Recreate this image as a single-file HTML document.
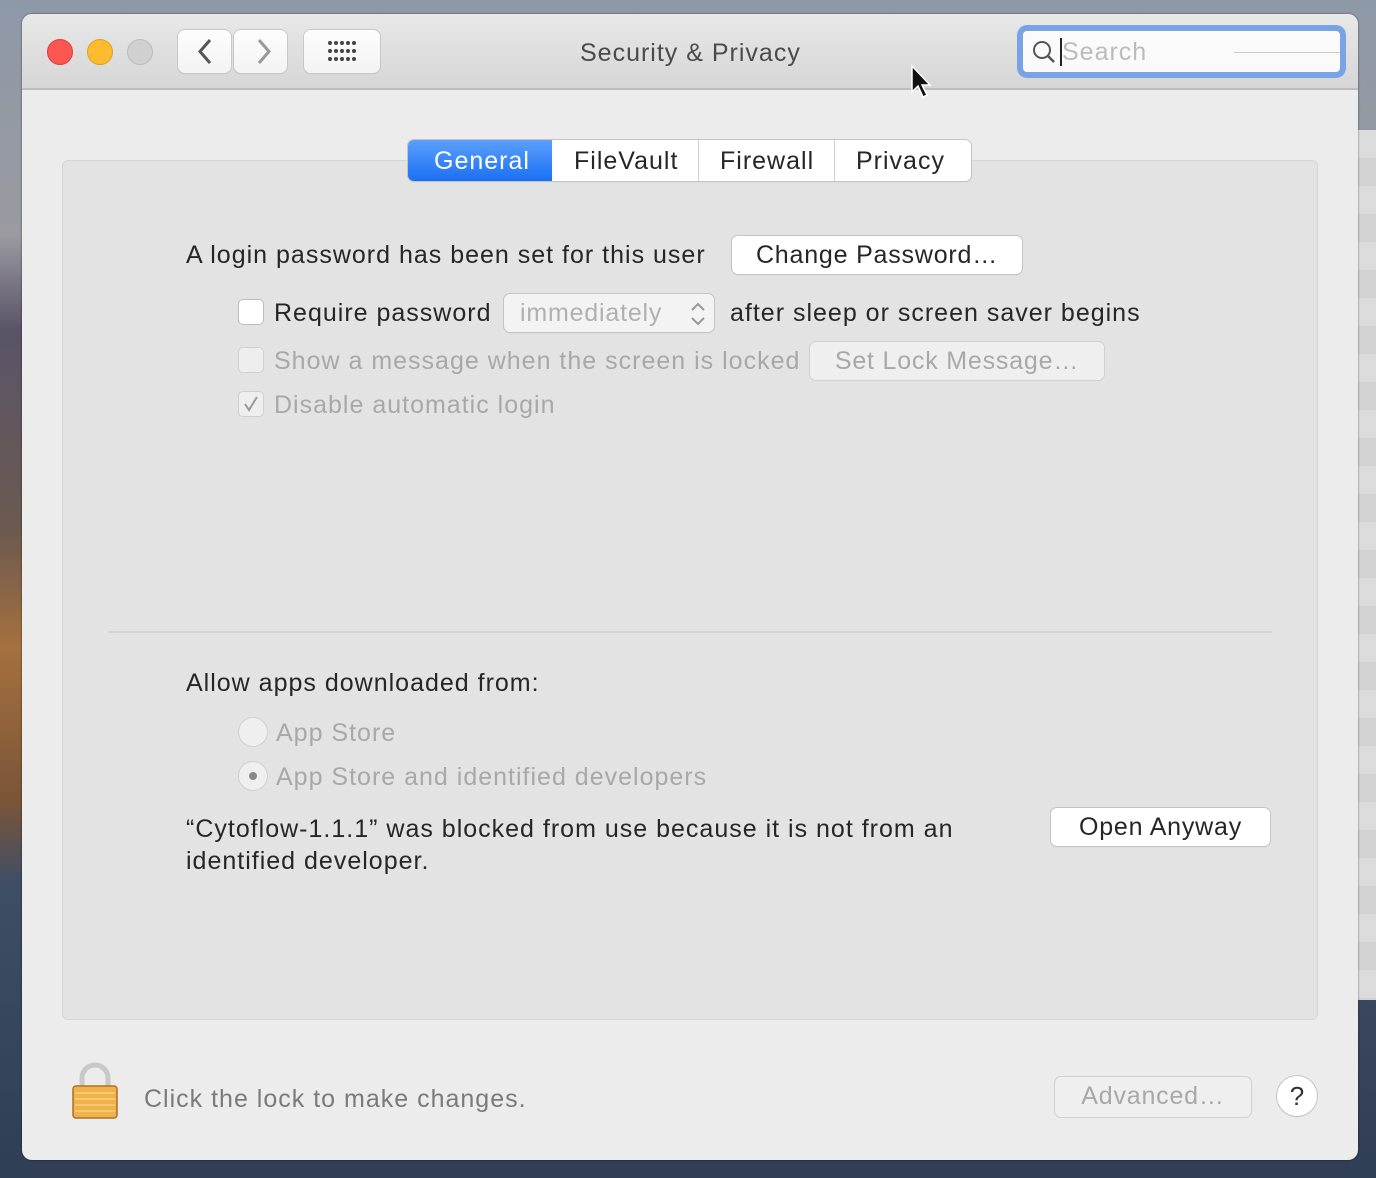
<!DOCTYPE html>
<html><head><meta charset="utf-8"><style>
*{box-sizing:border-box;margin:0;padding:0}
body{width:1376px;height:1178px;overflow:hidden;position:relative;font-family:"Liberation Sans",sans-serif;
background:linear-gradient(180deg,#8e99a8 0%,#9a9aa0 20%,#5a5468 28%,#6b5a50 45%,#a5703f 55%,#7a5538 68%,#3f4e64 75%,#2f3e55 100%);}
.abs{position:absolute}
.win{left:22px;top:14px;width:1336px;height:1146px;background:#ececec;border-radius:10px;box-shadow:0 0 2px rgba(0,0,0,.5);overflow:hidden}
.title{left:0;top:0;width:1336px;height:76px;background:linear-gradient(#e8e8e8,#d6d6d6);border-bottom:2px solid #bdbdbd}
.dot{width:26px;height:26px;border-radius:50%;top:25px}
.btn{background:linear-gradient(#fdfdfd,#f3f3f3);border-radius:7px;box-shadow:0 0 0 1px #c8c8c8,0 1px 1px rgba(0,0,0,.15)}
.t{white-space:nowrap;font-size:25px;letter-spacing:1px;color:#262626}
.dis{color:#a8a8a8}
.pb{background:#fff;border-radius:6px;box-shadow:0 0 0 1px #c4c4c4,0 1px 1px rgba(0,0,0,.15);text-align:center;font-size:25px;letter-spacing:.8px;color:#262626;line-height:38px;white-space:nowrap}
.cb{width:26px;height:26px;border-radius:5px;background:#fff;border:1.5px solid #bdbdbd}
</style></head><body>
<div class="abs" style="left:1358px;top:130px;width:18px;height:870px;background:repeating-linear-gradient(#dcdcdc 0 28px,#d2d2d2 28px 56px)"></div>
<div class="abs win">
 <div class="abs title">
  <div class="abs dot" style="left:25px;background:#fc5652;border:1px solid #de3e3a"></div>
  <div class="abs dot" style="left:65px;background:#fdbc30;border:1px solid #dea024"></div>
  <div class="abs dot" style="left:105px;background:#d0d0d0;border:1px solid #bcbcbc"></div>
  <div class="abs btn" style="left:156px;top:16px;width:53px;height:43px"></div>
  <div class="abs btn" style="left:212px;top:16px;width:53px;height:43px"></div>
  <svg class="abs" style="left:156px;top:16px" width="110" height="43"><path d="M32 10 L22 21.5 L32 33" stroke="#555" stroke-width="3" fill="none"/><path d="M81 10 L91 21.5 L81 33" stroke="#999" stroke-width="3" fill="none"/></svg>
  <div class="abs btn" style="left:282px;top:16px;width:76px;height:43px"></div>
  <svg class="abs" style="left:282px;top:16px" width="76" height="43">
   <g fill="#444"><circle cx="26" cy="13" r="2"/><circle cx="32" cy="13" r="2"/><circle cx="38" cy="13" r="2"/><circle cx="44" cy="13" r="2"/><circle cx="50" cy="13" r="2"/>
   <circle cx="26" cy="21" r="2"/><circle cx="32" cy="21" r="2"/><circle cx="38" cy="21" r="2"/><circle cx="44" cy="21" r="2"/><circle cx="50" cy="21" r="2"/>
   <circle cx="26" cy="29" r="2"/><circle cx="32" cy="29" r="2"/><circle cx="38" cy="29" r="2"/><circle cx="44" cy="29" r="2"/><circle cx="50" cy="29" r="2"/></g></svg>
  <div class="abs t" style="left:558px;top:25px;color:#4a4a4a">Security &amp; Privacy</div>
  <div class="abs" style="left:995px;top:11px;width:329px;height:53px;border-radius:10px;background:#fafafa;box-shadow:0 0 0 6px #7aa3e6 inset"></div>
  <div class="abs" style="left:1001px;top:17px;width:317px;height:41px;border-radius:6px;background:#fafafa"></div>
  <svg class="abs" style="left:1008px;top:24px" width="28" height="28"><circle cx="12" cy="12" r="8" stroke="#555" stroke-width="2" fill="none"/><path d="M18 18 L24 24" stroke="#555" stroke-width="2.5"/></svg>
  <div class="abs" style="left:1038px;top:24px;width:2px;height:28px;background:#222"></div>
  <div class="abs t" style="left:1040px;top:24px;color:#bbb">Search</div>
  <div class="abs" style="left:1212px;top:38px;width:106px;height:1px;background:#ccc"></div>
 </div>
 <div class="abs" style="left:40px;top:146px;width:1256px;height:860px;background:#e3e3e3;border:1px solid #d6d6d6;border-radius:6px"></div>
 <div class="abs" style="left:386px;top:126px;width:563px;height:41px;background:#fff;border-radius:6px;box-shadow:0 0 0 1px #c4c4c4,0 1px 1px rgba(0,0,0,.15)"></div>
 <div class="abs" style="left:386px;top:126px;width:144px;height:41px;background:linear-gradient(#5aa0fb,#1c6ff5);border-radius:6px 0 0 6px"></div>
 <div class="abs" style="left:676px;top:126px;width:1px;height:41px;background:#d0d0d0"></div>
 <div class="abs" style="left:812px;top:126px;width:1px;height:41px;background:#d0d0d0"></div>
 <div class="abs t" style="left:412px;top:133px;color:#fff">General</div>
 <div class="abs t" style="left:552px;top:133px">FileVault</div>
 <div class="abs t" style="left:698px;top:133px">Firewall</div>
 <div class="abs t" style="left:834px;top:133px">Privacy</div>

 <div class="abs t" style="left:164px;top:227px">A login password has been set for this user</div>
 <div class="abs pb" style="left:710px;top:222px;width:290px;height:38px">Change Password…</div>
 <div class="abs cb" style="left:216px;top:285px"></div>
 <div class="abs t" style="left:252px;top:285px">Require password</div>
 <div class="abs pb dis" style="left:482px;top:280px;width:210px;height:38px;background:#f3f3f3;text-align:left;padding-left:16px;color:#b0b0b0">immediately</div>
 <svg class="abs" style="left:666px;top:286px" width="20" height="28"><path d="M4 10 L10 4 L16 10 M4 18 L10 24 L16 18" stroke="#999" stroke-width="2" fill="none"/></svg>
 <div class="abs t" style="left:708px;top:285px">after sleep or screen saver begins</div>
 <div class="abs cb" style="left:216px;top:333px;background:#eee;border-color:#d0d0d0"></div>
 <div class="abs t dis" style="left:252px;top:333px">Show a message when the screen is locked</div>
 <div class="abs pb" style="left:788px;top:328px;width:294px;height:38px;background:#efefef;color:#a8a8a8;box-shadow:0 0 0 1px #d0d0d0">Set Lock Message…</div>
 <div class="abs cb" style="left:216px;top:377px;background:#eee;border-color:#d0d0d0"></div>
 <svg class="abs" style="left:216px;top:377px" width="26" height="26"><path d="M7 13 L11 19 L19 6" stroke="#999" stroke-width="2" fill="none"/></svg>
 <div class="abs t dis" style="left:252px;top:377px">Disable automatic login</div>

 <div class="abs" style="left:86px;top:617px;width:1164px;height:2px;background:#d2d2d2"></div>
 <div class="abs t" style="left:164px;top:655px">Allow apps downloaded from:</div>
 <div class="abs" style="left:216px;top:703px;width:30px;height:30px;border-radius:50%;background:#efefef;border:1.5px solid #d0d0d0"></div>
 <div class="abs t dis" style="left:254px;top:705px">App Store</div>
 <div class="abs" style="left:216px;top:747px;width:30px;height:30px;border-radius:50%;background:#efefef;border:1.5px solid #d0d0d0"></div>
 <div class="abs" style="left:227px;top:758px;width:8px;height:8px;border-radius:50%;background:#888"></div>
 <div class="abs t dis" style="left:254px;top:749px">App Store and identified developers</div>
 <div class="abs t" style="left:164px;top:799px;line-height:32px">“Cytoflow-1.1.1” was blocked from use because it is not from an<br>identified developer.</div>
 <div class="abs pb" style="left:1029px;top:794px;width:219px;height:38px">Open Anyway</div>

 <svg class="abs" style="left:48px;top:1048px" width="50" height="60">
  <path d="M12 26 V16 a13 13 0 0 1 26 0 V26" stroke="#c8c8c8" stroke-width="5" fill="none"/>
  <rect x="3" y="24" width="44" height="32" rx="3" fill="#f0b24a" stroke="#b26f22" stroke-width="1.5"/>
  <g stroke="#f7cf80" stroke-width="1.5"><path d="M5 31H45M5 37H45M5 43H45M5 49H45"/></g>
 </svg>
 <div class="abs t" style="left:122px;top:1071px;color:#7a7a7a">Click the lock to make changes.</div>
 <div class="abs pb" style="left:1033px;top:1063px;width:196px;height:40px;background:#efefef;color:#a8a8a8;box-shadow:0 0 0 1px #d0d0d0">Advanced…</div>
 <div class="abs" style="left:1255px;top:1062px;width:40px;height:40px;border-radius:50%;background:#fff;box-shadow:0 0 0 1px #c4c4c4,0 1px 1px rgba(0,0,0,.2);text-align:center;line-height:40px;font-size:26px;color:#333">?</div>
</div>
<svg class="abs" style="left:908px;top:64px" width="28" height="40"><path d="M4 2 L4 28 L10 22 L15 33 L19 31 L14 21 L22 21 Z" fill="#111" stroke="#fff" stroke-width="1.5"/></svg>
</body></html>
